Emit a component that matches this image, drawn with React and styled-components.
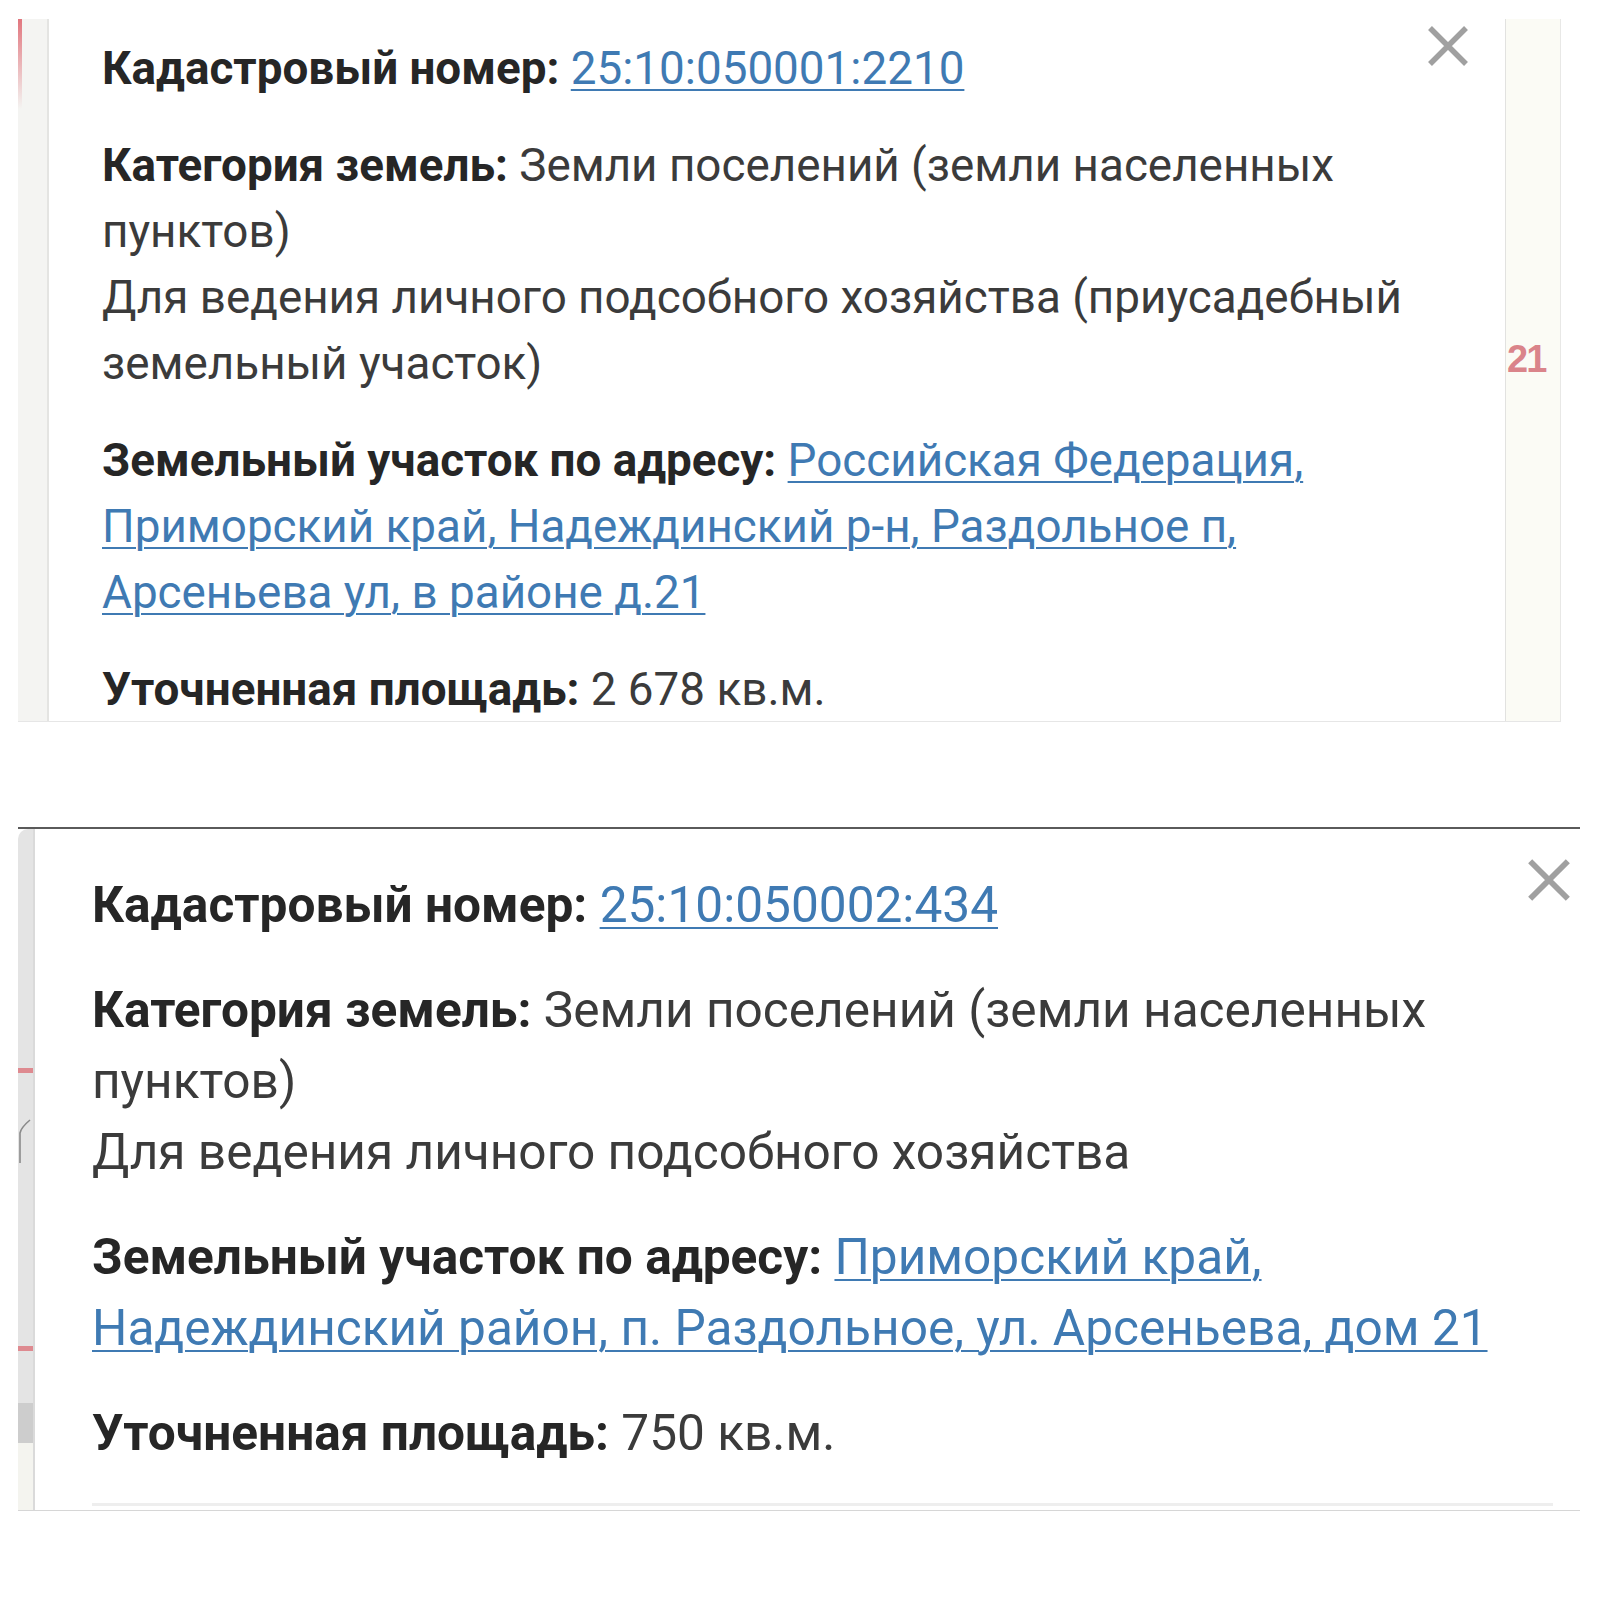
import React from 'react';
import styled, { createGlobalStyle } from 'styled-components';

const GlobalStyle = createGlobalStyle`
  html, body {
    margin: 0;
    padding: 0;
    background: #ffffff;
  }
  body {
    font-family: Roboto, "Noto Sans", "Liberation Sans", sans-serif;
  }
`;

const CloseIcon = ({ size }) => (
  <svg width={size} height={size} viewBox="0 0 44 44">
    <path d="M4 4 L40 40 M40 4 L4 40" stroke="#a0a0a0" strokeWidth="5.5" strokeLinecap="butt" />
  </svg>
);

const sizes = {
  sm: { font: 45.8, line: 66, gap: 31 },
  lg: { font: 49.6, line: 71, gap: 34 },
};

export default function App() {
  return (
    <Page>
      <GlobalStyle />
      <TopCard>
        <TopStrip />
        <Body $pad="5px 0 0 53px">
          <Header>
            <Para $size="sm" $first="12px">
              <Label>Кадастровый номер:</Label> <Link href="#">25:10:050001:2210</Link>
            </Para>
            <CloseButton $top="0px" $right="35px">
              <CloseIcon size={44} />
            </CloseButton>
          </Header>
          <Para $size="sm">
            <Label>Категория земель:</Label> Земли поселений (земли населенных
            <br />пунктов)
            <br />Для ведения личного подсобного хозяйства (приусадебный
            <br />земельный участок)
          </Para>
          <Para $size="sm">
            <Label>Земельный участок по адресу:</Label>{' '}
            <Link href="#">
              Российская Федерация,
              <br />Приморский край, Надеждинский р-н, Раздольное п,
              <br />Арсеньева ул, в районе д.21
            </Link>
          </Para>
          <Para $size="sm">
            <Label>Уточненная площадь:</Label> 2 678 кв.м.
          </Para>
        </Body>
        <MapEdge>
          <MapLabel>21</MapLabel>
        </MapEdge>
      </TopCard>

      <Separator />

      <BottomCard>
        <BottomStrip>
          <StripCurve width="14" height="44" viewBox="0 0 14 44">
            <path d="M12 1 C6 6 3 9 2 14 L2 44" stroke="#8a8a8a" strokeWidth="1.6" fill="none" />
          </StripCurve>
        </BottomStrip>
        <Body $pad="28px 0 0 57px">
          <Header>
            <Para $size="lg" $first="13px">
              <Label>Кадастровый номер:</Label> <Link href="#">25:10:050002:434</Link>
            </Para>
            <CloseButton $top="0px" $right="8px">
              <CloseIcon size={46} />
            </CloseButton>
          </Header>
          <Para $size="lg">
            <Label>Категория земель:</Label> Земли поселений (земли населенных
            <br />пунктов)
            <br />Для ведения личного подсобного хозяйства
          </Para>
          <Para $size="lg">
            <Label>Земельный участок по адресу:</Label>{' '}
            <Link href="#">
              Приморский край,
              <br />Надеждинский район, п. Раздольное, ул. Арсеньева, дом 21
            </Link>
          </Para>
          <Para $size="lg">
            <Label>Уточненная площадь:</Label> 750 кв.м.
          </Para>
          <Divider />
        </Body>
      </BottomCard>
    </Page>
  );
}

const Page = styled.div`
  width: 1600px;
  height: 1600px;
  padding: 19px 0 0 18px;
  box-sizing: border-box;
  background: #ffffff;
`;

const TopCard = styled.div`
  width: 1543px;
  height: 703px;
  display: flex;
  background: #ffffff;
  border-bottom: 1px solid #e6e6e6;
  box-sizing: border-box;
  overflow: hidden;
`;

const TopStrip = styled.div`
  width: 31px;
  flex: none;
  box-sizing: border-box;
  border-right: 2px solid #e4e4e2;
  background:
    linear-gradient(to bottom, rgba(222, 96, 106, 0.85), rgba(222, 96, 106, 0) 90px) left top / 4px 100% no-repeat,
    #f4f4f2;
`;

const Body = styled.div`
  flex: 1;
  padding: ${p => p.$pad};
  min-width: 0;
`;

const Header = styled.div`
  display: flex;
  justify-content: space-between;
  align-items: flex-start;
`;

const CloseButton = styled.div`
  flex: none;
  display: flex;
  margin-top: ${p => p.$top};
  margin-right: ${p => p.$right};
`;

const Para = styled.p`
  margin: ${p => p.$first || '0'} 0 ${p => sizes[p.$size].gap}px;
  font-size: ${p => sizes[p.$size].font}px;
  line-height: ${p => sizes[p.$size].line}px;
  color: #3b3b3b;
  white-space: nowrap;
`;

const Label = styled.b`
  font-weight: 700;
  color: #262626;
`;

const Link = styled.a`
  color: #3f7ab3;
  text-decoration: underline;
  text-decoration-thickness: 2px;
  text-underline-offset: 5px;
`;

const MapEdge = styled.div`
  width: 56px;
  flex: none;
  box-sizing: border-box;
  border-left: 1px solid #e2e2e0;
  border-right: 1px solid #e8e8e6;
  background: #fbfbf5;
  overflow: hidden;
  padding: 318px 0 0 1px;
`;

const MapLabel = styled.div`
  font-family: "Liberation Sans", Arial, sans-serif;
  font-weight: 700;
  font-size: 38px;
  line-height: 44px;
  letter-spacing: -2px;
  color: rgba(204, 78, 90, 0.7);
`;

const Separator = styled.div`
  width: 1562px;
  height: 2px;
  margin-top: 105px;
  background: #5a5a5a;
`;

const BottomCard = styled.div`
  width: 1562px;
  height: 682px;
  display: flex;
  background: #ffffff;
  border-bottom: 1px solid #d6d6d6;
  box-sizing: border-box;
`;

const BottomStrip = styled.div`
  width: 17px;
  flex: none;
  box-sizing: border-box;
  border-right: 2px solid #dadada;
  border-top-left-radius: 10px;
  padding-top: 290px;
  background: linear-gradient(
    to bottom,
    #e4e4e4 0,
    #e4e4e4 239px,
    #de8a90 239px,
    #de8a90 244px,
    #e4e4e4 244px,
    #e4e4e4 517px,
    #de8a90 517px,
    #de8a90 522px,
    #e4e4e4 522px,
    #e4e4e4 574px,
    #cdcdcd 574px,
    #cdcdcd 614px,
    #f4f4ef 614px
  );
`;

const StripCurve = styled.svg`
  display: block;
`;

const Divider = styled.div`
  width: 1461px;
  height: 3px;
  margin-top: 2px;
  background: #eeeeee;
`;
